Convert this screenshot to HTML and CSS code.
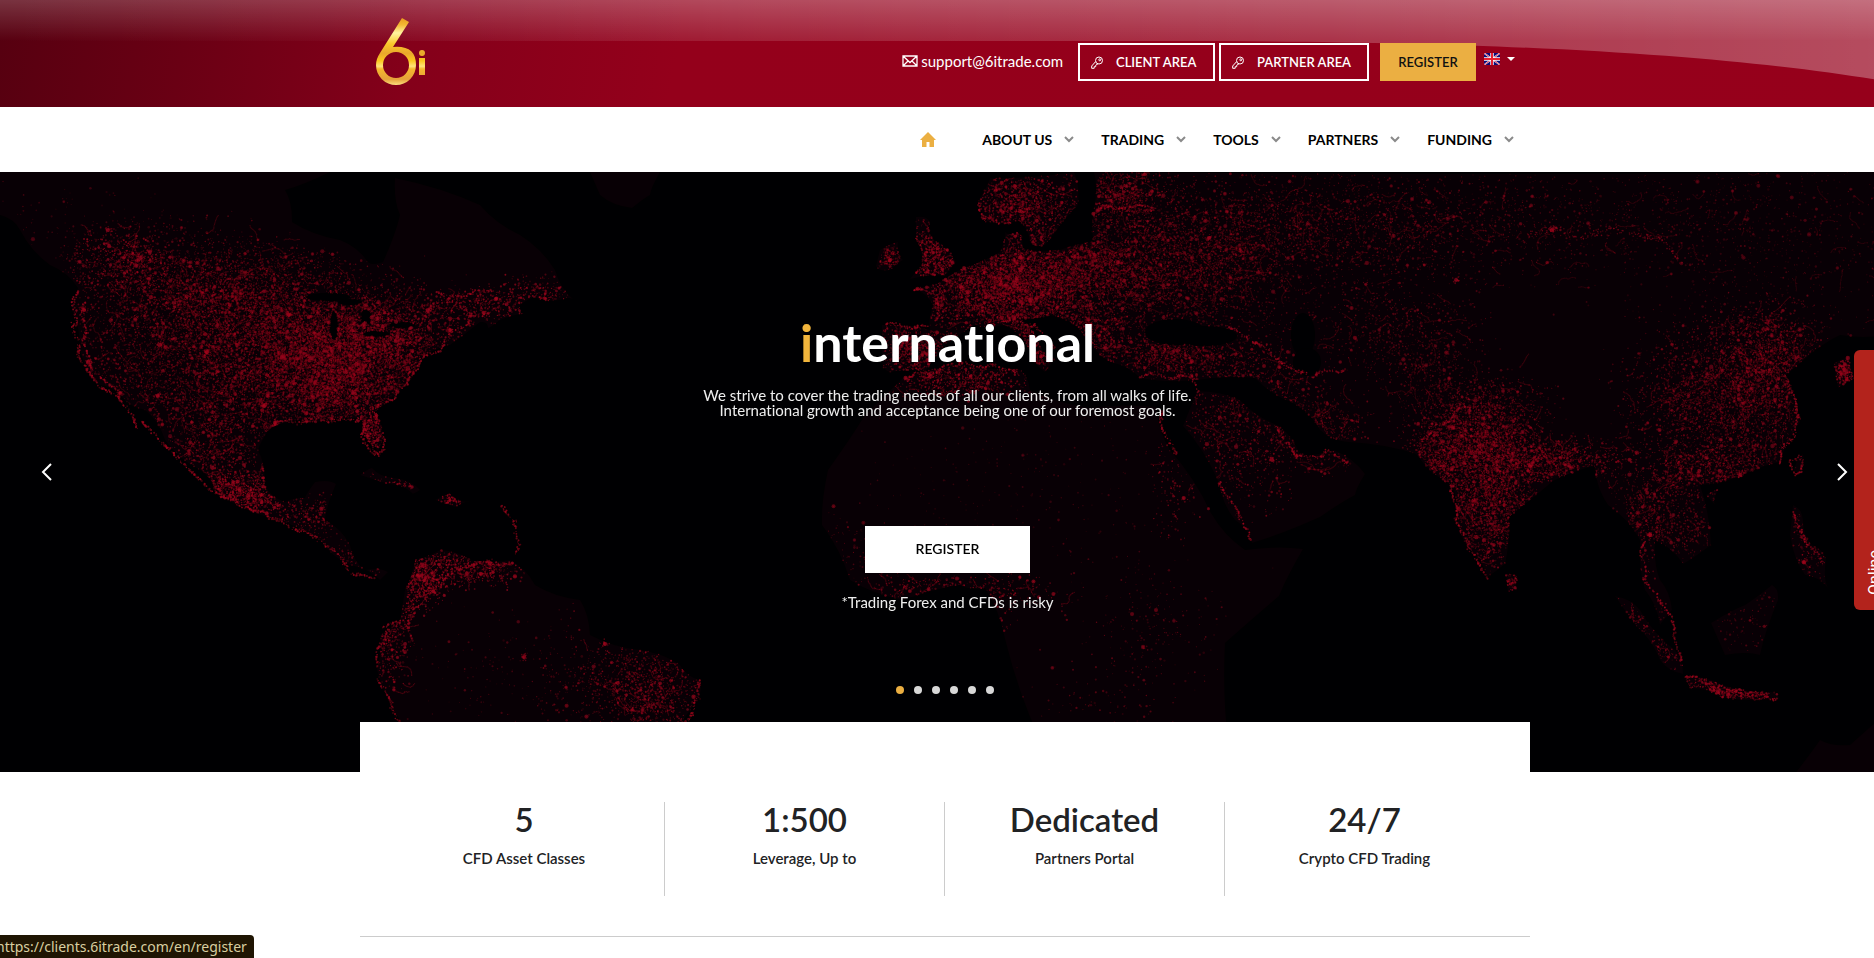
FILE: index.html
```html
<!DOCTYPE html>
<html lang="en">
<head>
<meta charset="utf-8">
<title>6itrade</title>
<link rel="stylesheet" href="styles.css">
</head>
<body>
<div class="page">
  <header class="topbar">
    <svg class="sheen" viewBox="0 0 1890 107" preserveAspectRatio="none" aria-hidden="true">
      <defs>
        <linearGradient id="sheenX" x1="0" y1="0" x2="1" y2="0">
          <stop offset="0" stop-color="#fff" stop-opacity="0"/>
          <stop offset=".2" stop-color="#fff" stop-opacity=".03"/>
          <stop offset=".4" stop-color="#fff" stop-opacity=".12"/>
          <stop offset=".7" stop-color="#fff" stop-opacity=".2"/>
          <stop offset="1" stop-color="#fff" stop-opacity=".3"/>
        </linearGradient>
        <linearGradient id="sheenY" x1="0" y1="0" x2="0" y2="1">
          <stop offset="0" stop-color="#fff" stop-opacity=".2"/>
          <stop offset=".5" stop-color="#fff" stop-opacity="0"/>
        </linearGradient>
      </defs>
      <path fill="url(#sheenX)" d="M0 0H1890V82C1760 60 1560 41 1180 41H0Z"/>
      <path fill="url(#sheenY)" d="M0 0H1890V82C1760 60 1560 41 1180 41H0Z"/>
    </svg>
    <div class="container topbar-row">
      <a class="logo" href="#" aria-label="6i">
        <svg width="50" height="68" viewBox="0 0 50 68">
          <defs>
            <linearGradient id="gold" gradientUnits="userSpaceOnUse" x1="0" y1="0" x2="0" y2="68">
              <stop offset="0" stop-color="#e89a1c"/>
              <stop offset=".1" stop-color="#f3b933"/>
              <stop offset=".22" stop-color="#fff3a0"/>
              <stop offset=".38" stop-color="#f9c92a"/>
              <stop offset=".52" stop-color="#e9a72c"/>
              <stop offset=".63" stop-color="#fbc81f"/>
              <stop offset=".71" stop-color="#ffe37a"/>
              <stop offset=".75" stop-color="#f5b82e"/>
              <stop offset=".9" stop-color="#e5a23a"/>
              <stop offset="1" stop-color="#ffe98a"/>
            </linearGradient>
          </defs>
          <path fill="url(#gold)" fill-rule="evenodd" d="M26 0L33 4L17 29Q40 27 40 47A20 20 0 0 1 0 47Q0 41 4 35ZM20 34A13 13 0 1 0 20 60A13 13 0 1 0 20 34Z"/>
          <circle fill="url(#gold)" cx="46" cy="35" r="3"/>
          <path fill="url(#gold)" d="M43 40H49V57H43Z"/>
        </svg>
      </a>
      <div class="tools">
        <a class="mail" href="#">
          <svg width="16" height="12" viewBox="0 0 16 12" fill="none" stroke="#fff" stroke-width="1.300"><path d="M1 1H15V11H1ZM1 1L8 7.500L15 1M1 11L6 6M15 11L10 6"/></svg>
          <span>support@6itrade.com</span>
        </a>
        <a class="btn outline client" href="#">
          <svg width="12" height="13" viewBox="0 0 12 13" fill="none" stroke="#fff"><circle cx="8" cy="4.500" r="3.500"/><circle cx="8.800" cy="3.800" r="1"/><path d="M4.700 5.500L.7 10V12.300H3.200V10.700H4.700V9.200L7 7.800"/></svg>
          <span>CLIENT AREA</span>
        </a>
        <a class="btn outline partner" href="#">
          <svg width="12" height="13" viewBox="0 0 12 13" fill="none" stroke="#fff"><circle cx="8" cy="4.500" r="3.500"/><circle cx="8.800" cy="3.800" r="1"/><path d="M4.700 5.500L.7 10V12.300H3.200V10.700H4.700V9.200L7 7.800"/></svg>
          <span>PARTNER AREA</span>
        </a>
        <a class="btn gold" href="#">REGISTER</a>
        <button class="lang" type="button" aria-label="Language: English">
          <svg width="16" height="12" viewBox="0 0 16 12"><path fill="#0a0a78" d="M0 0H16V12H0Z"/><path stroke="#fff" stroke-width="1.500" d="M0 0L16 12M16 0L0 12"/><path stroke="#e0203a" stroke-width=".8" d="M0 0L16 12M16 0L0 12"/><path stroke="#fff" stroke-width="3.400" d="M8 0V12M0 6H16"/><path stroke="#e8202f" stroke-width="2" d="M8 0V12M0 6H16"/></svg>
          <svg width="8" height="4" viewBox="0 0 8 4"><path fill="#fff" d="M0 0H8L4 4Z"/></svg>
        </button>
      </div>
    </div>
  </header>

  <nav class="mainnav">
    <div class="container nav-row">
      <a class="home" href="#" aria-label="Home"><svg width="16" height="15" viewBox="0 0 16 15"><path fill="#ebaf42" d="M8 0L16 8H14V15H9.500V10H6.500V15H2V8H0Z"/></svg></a>
      <a class="item" href="#">ABOUT US <svg width="10" height="7" viewBox="0 0 10 7"><path d="M1 1L5 5L9 1"/></svg></a>
      <a class="item" href="#">TRADING <svg width="10" height="7" viewBox="0 0 10 7"><path d="M1 1L5 5L9 1"/></svg></a>
      <a class="item" href="#">TOOLS <svg width="10" height="7" viewBox="0 0 10 7"><path d="M1 1L5 5L9 1"/></svg></a>
      <a class="item" href="#">PARTNERS <svg width="10" height="7" viewBox="0 0 10 7"><path d="M1 1L5 5L9 1"/></svg></a>
      <a class="item" href="#">FUNDING <svg width="10" height="7" viewBox="0 0 10 7"><path d="M1 1L5 5L9 1"/></svg></a>
    </div>
  </nav>

  <section class="hero">
    <canvas class="map" id="map" width="1890" height="600"></canvas>
    <button class="arrow prev" type="button" aria-label="Previous"><svg width="11" height="18" viewBox="0 0 11 18"><path d="M10 1L2 9L10 17"/></svg></button>
    <div class="slide">
      <div class="slide-text">
        <h1><span class="accent">i</span>nternational</h1>
        <p class="lead">We strive to cover the trading needs of all our clients, from all walks of life.<br>International growth and acceptance being one of our foremost goals.</p>
        <a class="cta" href="#">REGISTER</a>
        <p class="risk">*Trading Forex and CFDs is risky</p>
      </div>
      <div class="dots">
        <button class="dot active" type="button" aria-label="Slide 1"></button>
        <button class="dot" type="button" aria-label="Slide 2"></button>
        <button class="dot" type="button" aria-label="Slide 3"></button>
        <button class="dot" type="button" aria-label="Slide 4"></button>
        <button class="dot" type="button" aria-label="Slide 5"></button>
        <button class="dot" type="button" aria-label="Slide 6"></button>
      </div>
    </div>
    <button class="arrow next" type="button" aria-label="Next"><svg width="11" height="18" viewBox="0 0 11 18"><path d="M1 1L9 9L1 17"/></svg></button>
  </section>

  <main class="container card">
    <div class="stats">
      <div class="stat"><h2>5</h2><p>CFD Asset Classes</p></div>
      <div class="stat"><h2>1:500</h2><p>Leverage, Up to</p></div>
      <div class="stat"><h2>Dedicated</h2><p>Partners Portal</p></div>
      <div class="stat"><h2>24/7</h2><p>Crypto CFD Trading</p></div>
    </div>
  </main>

  <button class="chat" type="button">Online</button>
  <div class="status">https://clients.6itrade.com/en/register</div>
</div>
<script src="map.js"></script>
</body>
</html>
```
FILE: styles.css
```css
* { box-sizing: border-box; }
html, body { margin: 0; height: 100%; overflow: hidden; }
body {
  font-family: Lato, "Open Sans", sans-serif;
  font-size: 15px;
  font-variant-ligatures: none;
  color: #212224;
  background: #fff;
}
a { color: inherit; text-decoration: none; }
button { font: inherit; border: 0; padding: 0; background: none; color: inherit; cursor: pointer; }
h1, h2, p { margin: 0; }
svg { display: block; flex: none; }

.page { position: relative; width: calc(100% + 16px); height: 100%; overflow: hidden; }
.container { width: 1170px; margin: 0 auto; }

.topbar {
  position: relative;
  height: 107px;
  background: linear-gradient(100deg, #560010 0%, #6a0014 10%, #84001a 22%, #94001b 36%, #96001b 100%);
}
.sheen { position: absolute; inset: 0; width: 100%; height: 100%; }
.topbar-row {
  position: relative;
  display: flex;
  justify-content: space-between;
  align-items: flex-start;
  padding: 18px 15px 0 16px;
}
.tools { display: flex; align-items: center; height: 38px; margin-top: 25px; color: #fff; }
.mail { display: flex; align-items: center; gap: 3px; margin: 0 15px 3px 0; font-size: 15px; }
.btn { display: flex; align-items: center; height: 38px; font-size: 13px; font-weight: 600; white-space: nowrap; }
.outline { gap: 13px; padding: 0 16px 0 11px; border: 2px solid #fff; margin-right: 4px; }
.client { width: 137px; }
.partner { width: 150px; margin-right: 11px; }
.gold { justify-content: center; width: 96px; background: #ebaf42; color: #111; }
.lang { display: flex; align-items: center; gap: 7px; margin: 0 0 6px 8px; }

.mainnav { height: 65px; background: #fff; }
.nav-row { display: flex; justify-content: flex-end; align-items: center; height: 65px; padding-right: 16px; color: #000; }
.home { margin-right: 46px; }
.item { display: flex; align-items: center; gap: 12px; font-size: 14px; font-weight: 700; }
.item + .item { margin-left: 27px; }
.item path { fill: none; stroke: #8a8a8a; stroke-width: 2; }

.hero { position: relative; height: 600px; background: #000; color: #fff; }
.map { position: absolute; inset: 0; width: 100%; height: 100%; object-fit: cover; }
.slide { position: relative; display: flex; flex-direction: column; align-items: center; padding-top: 138px; text-align: center; }
.slide-text { display: flex; flex-direction: column; align-items: center; padding-left: 5px; }
h1 { font-size: 52px; line-height: 64px; font-weight: 700; }
.accent { color: #f2b53c; }
.lead { margin-top: 14px; font-size: 15px; line-height: 15px; color: #eee; white-space: nowrap; }
.cta { display: grid; place-items: center; width: 165px; height: 47px; margin-top: 108px; padding-bottom: 2px; background: #fff; color: #000; font-size: 14px; font-weight: 600; }
.risk { margin-top: 19px; font-size: 15px; line-height: 20px; color: #eee; }
.dots { display: flex; gap: 10px; margin-top: 74px; }
.dot { width: 8px; height: 8px; border-radius: 50%; background: #d8d8d8; }
.dot.active { background: #ebaf42; }
.arrow { position: absolute; z-index: 1; top: 291px; }
.arrow path { fill: none; stroke: #fff; stroke-width: 2; }
.prev { left: 41px; }
.next { right: 42px; }

.card { position: relative; margin-top: -50px; padding: 80px 26px 40px 24px; background: #fff; border-bottom: 1px solid #ccc; }
.stats { display: grid; grid-template-columns: repeat(4, 1fr); }
.stat { height: 94px; text-align: center; }
.stat + .stat { border-left: 1px solid #ccc; }
h2 { font-size: 33px; line-height: 34px; font-weight: 600; }
.stat p { margin-top: 12px; font-size: 15px; line-height: 20px; font-weight: 600; }

.chat {
  position: absolute;
  top: 350px;
  right: 0;
  width: 36px;
  height: 260px;
  padding: 15px 4px 0 0;
  text-align: left;
  writing-mode: vertical-rl;
  transform: rotate(180deg);
  border-radius: 0 6px 6px 0;
  background: #b3231c;
  color: #fff;
  font: 16px Roboto, sans-serif;
}
.status {
  position: absolute;
  left: 0;
  bottom: 0;
  height: 23px;
  padding-right: 7px;
  text-indent: -4px;
  border-radius: 0 4px 0 0;
  background: #1f1503;
  color: #d9cfa0;
  font: 14px/23px "Noto Sans", sans-serif;
}
```
FILE: map.js
```js
// Night-lights world map, drawn in a 1890 x 600 space.
const ctx = document.getElementById('map').getContext('2d');
let seed = 7;
const rnd = () => (seed = (seed * 16807) % 2147483647) / 2147483647;
const gauss = () => (rnd() + rnd() + rnd() - 1.5) / 1.5;

const OFF = 172;
const land = {
  northAmerica: [0,172, 330,172, 285,190, 292,222, 340,240, 368,262, 383,262, 400,215, 395,178, 480,205, 520,235, 555,270, 574,300, 560,300, 535,297, 520,305, 525,314, 500,320, 488,328, 480,322, 450,345, 425,355, 412,378, 395,395, 375,412, 383,440, 378,456, 368,440, 362,420, 330,420, 300,420, 270,428, 258,450, 265,485, 285,502, 305,498, 315,482, 336,484, 325,520, 350,545, 365,570, 388,572, 380,580, 350,565, 320,540, 270,518, 215,492, 200,470, 165,440, 145,410, 120,395, 98,385, 80,350, 72,310, 78,288, 50,265, 20,230, 0,215],
  southAmerica: [405,590, 415,560, 440,550, 470,560, 510,560, 535,585, 580,600, 590,635, 640,650, 680,665, 700,680, 698,700, 680,725, 660,760, 420,760, 400,720, 377,670, 380,635, 400,620],
  africa: [903,378, 960,364, 1019,369, 1030,390, 1090,408, 1156,407, 1170,450, 1211,513, 1245,550, 1303,549, 1279,596, 1225,643, 1228,740, 1040,740, 1005,639, 985,588, 960,585, 903,600, 850,580, 822,525, 828,470, 865,415],
  arabia: [1197,391, 1240,400, 1279,426, 1300,455, 1334,450, 1365,474, 1355,495, 1320,517, 1252,543, 1235,520, 1218,481, 1183,426],
  eurasia: [882,325, 930,330, 933,305, 912,288, 940,282, 964,268, 1000,252, 1005,232, 1018,232, 1022,248, 1060,250, 1094,242, 1094,209, 1094,172, 1890,172, 1890,335, 1840,335, 1814,351, 1786,375, 1800,422, 1779,462, 1738,477, 1700,485, 1711,545, 1683,564, 1655,540, 1660,580, 1672,610, 1660,625, 1645,590, 1640,540, 1608,505, 1594,466, 1553,481, 1509,517, 1505,564, 1487,577, 1470,550, 1457,517, 1451,485, 1416,454, 1348,442, 1320,430, 1293,403, 1255,378, 1197,380, 1140,378, 1110,362, 1080,330, 1050,315, 1020,318, 1040,345, 1055,358, 1045,372, 1030,350, 1005,325, 975,325, 945,345, 925,372, 890,372, 882,360],
  scandinavia: [978,201, 990,178, 1074,172, 1078,205, 1060,225, 1045,245, 1030,242, 1019,221, 985,221],
  britain: [916,217, 930,222, 934,240, 956,262, 945,276, 910,279, 922,265, 916,240],
  ireland: [880,250, 898,242, 903,260, 890,270, 876,266],
  sumatra: [1615,596, 1640,610, 1675,650, 1683,674, 1660,660, 1635,625],
  java: [1685,676, 1720,684, 1770,692, 1779,699, 1720,697, 1690,688],
  borneo: [1711,623, 1745,605, 1772,585, 1778,600, 1760,655, 1725,655],
  luzon: [1793,505, 1803,520, 1812,545, 1826,560, 1828,588, 1805,575, 1790,535],
  taiwan: [1793,470, 1797,455, 1803,454, 1799,474],
  hainan: [1706,495, 1718,490, 1715,505],
  japan: [1834,363, 1850,358, 1856,378, 1838,388],
  lanka: [1506,575, 1518,578, 1518,592, 1508,592],
  cuba: [360,475, 372,468, 395,478, 420,490, 412,493, 388,484],
  hispaniola: [435,500, 450,494, 470,502, 455,507],
  greenland: [590,172, 660,172, 650,195, 632,208, 600,195],
  australia: [1890,710, 1850,745, 1820,740, 1790,780, 1890,780]
};
const seas = [[1175,332,30,13],[1205,336,32,10],[1303,335,12,22],[1307,362,14,14],[334,326,4,15],[366,317,5,8],[376,334,13,3],[402,325,13,3],[328,297,22,4],[350,302,12,3]];

const shape = new Path2D();
for (const pts of Object.values(land)) {
  shape.moveTo(pts[0], pts[1] - OFF);
  for (let i = 2; i < pts.length; i += 2) {
    const wob = i / 2 % 2 ? 4 : -4;
    const mx = (pts[i - 2] + pts[i]) / 2 + wob;
    const my = (pts[i - 1] + pts[i + 1]) / 2 - OFF - wob;
    shape.quadraticCurveTo(mx, my, pts[i], pts[i + 1] - OFF);
  }
  shape.closePath();
}
const inSea = (x, y) => seas.some(s => ((x - s[0]) / s[2]) ** 2 + ((y - s[1]) / s[3]) ** 2 < 1);
const onLand = (x, y) => ctx.isPointInPath(shape, x, y - OFF) && !inSea(x, y);

ctx.fillStyle = '#000002';
ctx.fillRect(0, 0, 1890, 600);
ctx.fillStyle = '#080005';
ctx.fill(shape);
ctx.fillStyle = '#000002';
for (const s of seas) {
  ctx.beginPath();
  ctx.ellipse(s[0], s[1] - OFF, s[2], s[3], 0, 0, 7);
  ctx.fill();
}

function light(x, y, a, r) {
  ctx.fillStyle = `rgba(${135 + rnd() * 35 | 0},6,28,${a})`;
  ctx.beginPath();
  ctx.arc(x, y - OFF, r, 0, 7);
  ctx.fill();
}

// A short winding road of lights.
function road(x, y, a) {
  let dir = rnd() * 6.28;
  const steps = 5 + rnd() * 12;
  for (let k = 0; k < steps; k++) {
    if (!onLand(x, y)) return;
    light(x, y, a, .7);
    dir += gauss() * .9;
    x += Math.cos(dir) * 1.4;
    y += Math.sin(dir) * 1.4;
  }
}

// Populated areas: centre x, centre y, radius x, radius y, number of lights, strength.
const areas = [
  [310,355,125,90,5200,.55],[345,375,85,65,3200,.55],[390,330,90,45,1800,.6],[240,350,110,100,2600,.5],[150,350,100,110,2200,.55],
  [190,280,130,60,1200,.55],[80,240,120,60,220,.4],[120,260,55,35,450,.7],[250,290,110,50,1100,.5],[540,292,40,20,260,.7],[490,305,45,20,300,.7],
  [220,460,70,60,1000,.6],[240,495,60,25,900,.75],[310,520,50,30,350,.7],[360,560,35,20,160,.6],[370,435,16,32,350,.8],
  [420,575,28,35,600,.8],[470,567,70,22,600,.75],[390,635,22,55,450,.7],[650,690,60,60,1100,.65],[600,680,80,60,350,.55],[500,670,130,80,180,.45],[400,482,40,12,150,.7],[453,500,20,7,120,.8],
  [1000,290,90,55,3400,.6],[1060,270,110,60,3200,.55],[1180,270,140,80,3400,.48],[930,255,32,35,650,.75],[890,257,18,15,200,.65],
  [1020,200,60,40,1100,.65],[1120,195,60,35,800,.6],[915,350,45,28,700,.65],[1035,345,35,35,600,.7],[1090,335,45,30,600,.6],
  [1300,230,240,70,2400,.5],[1500,220,240,60,1000,.45],[1750,230,180,110,1000,.4],[1170,355,80,28,900,.55],[1250,390,80,60,900,.55],
  [960,380,80,20,650,.7],[1240,450,70,70,600,.6],[1320,430,50,45,600,.55],[1390,330,100,50,600,.5],[1430,370,60,60,450,.45],
  [1480,430,75,55,2100,.55],[1490,500,55,85,2600,.58],[1560,460,70,25,900,.6],[1440,460,35,35,500,.55],[1730,400,110,90,3200,.52],
  [1770,360,55,65,1300,.55],[1720,470,80,30,800,.6],[1650,515,40,60,650,.55],[1690,530,40,55,300,.5],[1730,690,60,20,700,.75],
  [1650,640,50,50,450,.65],[1750,620,50,50,180,.5],[1810,545,32,55,350,.65],[1845,372,16,18,350,.7],[1510,583,12,14,110,.7],
  [950,590,110,18,450,.65],[850,560,60,60,150,.5],[1040,480,200,110,300,.35],[1150,620,80,60,200,.5],[1110,690,90,60,120,.5],[1000,600,30,60,80,.7],[1170,490,22,70,110,.7]
];
for (const [cx, cy, rx, ry, n, s] of areas) {
  for (let i = 0; i < n; i++) {
    const x = cx + gauss() * rx * 1.3;
    const y = cy + gauss() * ry * 1.3;
    if (!onLand(x, y)) continue;
    light(x, y, s * (.35 + rnd() * .75), .5 + rnd() * rnd() * .9);
    if (n > 400 && i % 32 === 0) road(x, y, s * .6);
    if (i % 60 === 0) light(x, y, s, 1.4 + rnd() * .8);
  }
}

// Bright coastlines: x, y pairs.
const coasts = [
  [76,290, 74,325, 80,360, 98,385, 120,398, 140,430],[83,300, 84,340, 92,370, 118,392],
  [270,424, 310,420, 345,420, 362,418, 370,440, 378,456, 384,440, 374,412, 398,392, 412,370, 448,340, 470,318, 490,312],
  [362,425, 366,445, 375,456],[435,290, 450,300, 475,290, 492,290],[425,310, 450,300, 470,312],
  [140,420, 175,455, 210,490, 265,515, 310,535, 335,550, 350,572, 375,580],[410,640, 412,605, 435,580, 470,564, 510,563],[405,625, 425,595, 450,575],
  [375,665, 385,630, 405,615],[698,680, 700,700, 675,735],[500,504, 515,522, 518,555],[400,725, 380,680],
  [1160,410, 1164,430, 1176,455],[1217,480, 1240,515, 1250,540],[1140,375, 1195,378, 1198,395],[1275,425, 1297,458, 1332,452, 1350,465],
  [1451,480, 1457,520, 1470,550, 1488,578],[1418,455, 1430,430, 1470,405],[1642,540, 1645,580, 1670,615, 1680,660],[1683,675, 1720,688, 1775,698],
  [905,378, 960,364, 1017,370],[1798,454, 1792,465, 1796,476, 1803,458],[1792,510, 1805,540, 1825,565],[1778,462, 1800,420, 1788,380],
  [1225,325, 1260,345, 1285,365, 1310,376, 1345,368],[1000,320, 1035,325, 1055,350],[1095,208, 1150,207],[882,330, 890,325, 930,328],
  [978,201, 985,221, 1010,222],[912,288, 940,295, 935,320]
];
for (const c of coasts) {
  for (let i = 2; i < c.length; i += 2) {
    const len = Math.hypot(c[i] - c[i - 2], c[i + 1] - c[i - 1]);
    for (let d = 0; d < len; d += 1.1) {
      const t = d / len;
      const bend = Math.sin(d / 5 + i) * 2;
      light(c[i - 2] + (c[i] - c[i - 2]) * t + bend + gauss() * 2.4, c[i - 1] + (c[i + 1] - c[i - 1]) * t + bend + gauss() * 2.4, .35 + rnd() * .5, .5 + rnd() * .7);
    }
  }
}

// Railway towns across the steppe.
const rail = [1525,235, 1555,228, 1580,238, 1610,228, 1645,236, 1662,240, 1682,264];
for (let i = 2; i < rail.length; i += 2) {
  for (let k = 0; k < 22; k++) {
    const t = rnd();
    light(rail[i - 2] + (rail[i] - rail[i - 2]) * t + gauss() * 3, rail[i - 1] + (rail[i + 1] - rail[i - 1]) * t + gauss() * 5, .3 + rnd() * .4, .8);
  }
}

// Large cities.
const cities = [289,315, 428,310, 150,252, 108,230, 140,258, 264,406, 282,357, 311,358, 207,352, 158,396, 84,310, 88,362, 120,393, 275,423, 353,393, 450,330, 248,496, 364,324, 961,287, 1209,238, 1030,300, 1118,262, 1456,280, 1650,535, 1740,475, 1530,466, 1272,460, 1552,230, 605,644, 524,657, 490,563, 160,345];
for (let i = 0; i < cities.length; i += 2) {
  for (let k = 0; k < 16; k++) light(cities[i] + gauss() * 5, cities[i + 1] + gauss() * 5, .5, .8);
  light(cities[i], cities[i + 1], .7, 2);
}
```
